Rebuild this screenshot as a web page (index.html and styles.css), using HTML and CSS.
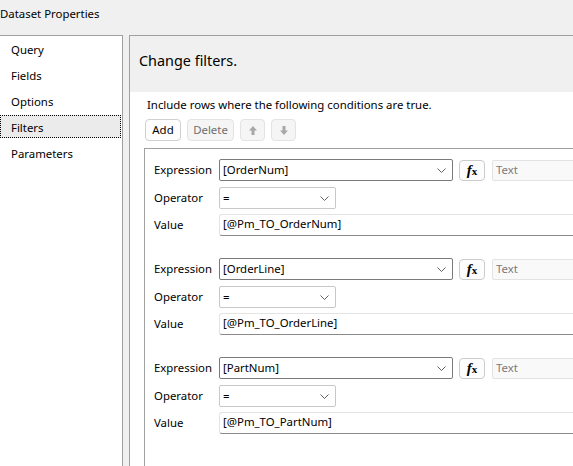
FILE: index.html
```html
<!DOCTYPE html>
<html>
<head>
    <title>Dataset Properties</title>
    <link rel="stylesheet" href="styles.css">
</head>
<body>
<div class="titlebar">Dataset Properties</div>
<div class="main">
    <div class="sidebar">
        <div class="nav-item">Query</div>
        <div class="nav-item">Fields</div>
        <div class="nav-item">Options</div>
        <div class="nav-item selected">Filters</div>
        <div class="nav-item">Parameters</div>
    </div>
    <div class="page">
        <div class="page-header">Change filters.</div>
        <div class="page-body">
            <div class="hint">Include rows where the following conditions are true.</div>
            <div class="toolbar">
                <div class="btn btn-add">Add</div>
                <div class="btn disabled btn-delete">Delete</div>
                <div class="btn disabled btn-icon">
                    <svg width="8" height="9" viewBox="0 0 8 9"><path d="M4 0 L8 4.5 L5.5 4.5 L5.5 9 L2.5 9 L2.5 4.5 L0 4.5 Z" fill="#a8a8a8"/></svg>
                </div>
                <div class="btn disabled btn-icon">
                    <svg width="8" height="9" viewBox="0 0 8 9"><path d="M4 9 L8 4.5 L5.5 4.5 L5.5 0 L2.5 0 L2.5 4.5 L0 4.5 Z" fill="#a8a8a8"/></svg>
                </div>
            </div>
            <div class="filter-list">
                <div class="filter">
                    <div class="filter-row">
                        <div class="label">Expression</div>
                        <div class="combo expr"><span>[OrderNum]</span><svg class="chev" width="9" height="5" viewBox="0 0 9 5"><path d="M0.5 0.5 L4.5 4.5 L8.5 0.5" fill="none" stroke="#606060"/></svg></div>
                        <div class="fx-btn"><i>f</i><b>x</b></div>
                        <div class="text-field">Text</div>
                    </div>
                    <div class="filter-row">
                        <div class="label">Operator</div>
                        <div class="combo oper"><span>=</span><svg class="chev" width="9" height="5" viewBox="0 0 9 5"><path d="M0.5 0.5 L4.5 4.5 L8.5 0.5" fill="none" stroke="#606060"/></svg></div>
                    </div>
                    <div class="filter-row">
                        <div class="label">Value</div>
                        <div class="value-box">[@Pm_TO_OrderNum]</div>
                    </div>
                </div>
                <div class="filter">
                    <div class="filter-row">
                        <div class="label">Expression</div>
                        <div class="combo expr"><span>[OrderLine]</span><svg class="chev" width="9" height="5" viewBox="0 0 9 5"><path d="M0.5 0.5 L4.5 4.5 L8.5 0.5" fill="none" stroke="#606060"/></svg></div>
                        <div class="fx-btn"><i>f</i><b>x</b></div>
                        <div class="text-field">Text</div>
                    </div>
                    <div class="filter-row">
                        <div class="label">Operator</div>
                        <div class="combo oper"><span>=</span><svg class="chev" width="9" height="5" viewBox="0 0 9 5"><path d="M0.5 0.5 L4.5 4.5 L8.5 0.5" fill="none" stroke="#606060"/></svg></div>
                    </div>
                    <div class="filter-row">
                        <div class="label">Value</div>
                        <div class="value-box">[@Pm_TO_OrderLine]</div>
                    </div>
                </div>
                <div class="filter">
                    <div class="filter-row">
                        <div class="label">Expression</div>
                        <div class="combo expr"><span>[PartNum]</span><svg class="chev" width="9" height="5" viewBox="0 0 9 5"><path d="M0.5 0.5 L4.5 4.5 L8.5 0.5" fill="none" stroke="#606060"/></svg></div>
                        <div class="fx-btn"><i>f</i><b>x</b></div>
                        <div class="text-field">Text</div>
                    </div>
                    <div class="filter-row">
                        <div class="label">Operator</div>
                        <div class="combo oper"><span>=</span><svg class="chev" width="9" height="5" viewBox="0 0 9 5"><path d="M0.5 0.5 L4.5 4.5 L8.5 0.5" fill="none" stroke="#606060"/></svg></div>
                    </div>
                    <div class="filter-row">
                        <div class="label">Value</div>
                        <div class="value-box">[@Pm_TO_PartNum]</div>
                    </div>
                </div>
            </div>
        </div>
    </div>
</div>
</body>
</html>
```

FILE: styles.css
```css
* {
    box-sizing: border-box;
}
html, body {
    margin: 0;
    height: 100%;
    overflow: hidden;
}
body {
    background-color: #f0f0f0;
    font-family: "Noto Sans", sans-serif;
    font-size: 11.4px;
    color: #000;
}
.titlebar {
    height: 35px;
    padding-top: 6px;
    line-height: 16px;
    font-size: 11.4px;
}
.main {
    display: flex;
    height: 431px;
}
.sidebar {
    width: 123px;
    flex-shrink: 0;
    background-color: #fff;
    border-top: 1px solid #a0a0a0;
    border-right: 1px solid #a0a0a0;
    padding-top: 1px;
}
.nav-item {
    height: 23px;
    padding-top: 3px;
    padding-left: 10px;
    margin-right: 1px;
    margin-bottom: 3px;
    border: 1px solid transparent;
    line-height: 17px;
}
.nav-item.selected {
    background-color: #ebebeb;
    border: 1px dotted #000;
}
.page {
    flex: 1;
    margin-left: 6px;
    background-color: #fff;
    border-top: 1px solid #a0a0a0;
    border-left: 1px solid #a0a0a0;
    min-width: 0;
}
.page-header {
    height: 56px;
    background-color: #f0f0f0;
    padding-top: 14px;
    padding-left: 9px;
    font-size: 14.4px;
    line-height: 22px;
}
.page-body {
    padding-left: 14px;
    padding-top: 5px;
}
.hint {
    line-height: 16px;
    padding-left: 3px;
}
.toolbar {
    display: flex;
    gap: 6px;
    margin-top: 6px;
    margin-left: 1px;
}
.btn {
    height: 22px;
    line-height: 20px;
    border: 1px solid #d0d0d0;
    border-radius: 4px;
    background-color: #fdfdfd;
    text-align: center;
}
.btn-add {
    width: 36px;
}
.btn-delete {
    width: 47px;
}
.btn-icon {
    width: 25px;
    display: flex;
    align-items: center;
    justify-content: center;
}
.btn.disabled {
    background-color: #f5f5f5;
    border-color: #e3e3e3;
    color: #6e6e6e;
}
.filter-list {
    margin-top: 7px;
    border-top: 1px solid #a0a0a0;
    border-left: 1px solid #a0a0a0;
    height: 400px;
    padding-top: 10px;
    padding-left: 9px;
}
.filter {
    margin-bottom: 22px;
}
.filter-row {
    display: flex;
    align-items: center;
    height: 22px;
    margin-bottom: 6px;
}
.filter-row:last-child {
    margin-bottom: 0;
}
.filter-row:nth-child(2) {
    margin-bottom: 5px;
}
.label {
    width: 65px;
    flex-shrink: 0;
    padding-bottom: 2px;
}
.combo {
    height: 22px;
    border: 1px solid #c8c8c8;
    border-radius: 2px;
    display: flex;
    align-items: center;
    justify-content: space-between;
    padding-left: 3px;
    padding-right: 6px;
    flex-shrink: 0;
}
.combo span {
    padding-bottom: 2px;
}
.combo.expr {
    width: 234px;
    border-color: #7a7a7a;
}
.combo.oper {
    width: 117px;
}
.fx-btn {
    width: 26px;
    height: 21px;
    margin-left: 6px;
    border: 1px solid #cccccc;
    border-radius: 4px;
    background-color: #fdfdfd;
    text-align: center;
    font-family: "Liberation Serif", serif;
    font-size: 15px;
    line-height: 18px;
    flex-shrink: 0;
}
.fx-btn i {
    font-weight: bold;
}
.fx-btn b {
    font-size: 11px;
}
.text-field {
    width: 120px;
    height: 21px;
    margin-left: 7px;
    border: 1px solid #e3e3e3;
    border-radius: 2px;
    background-color: #f9f9f9;
    color: #7a7a7a;
    padding-left: 3px;
    line-height: 18px;
    flex-shrink: 0;
}
.value-box {
    width: 420px;
    height: 22px;
    border: 1px solid #e3e3e3;
    border-bottom: 1px solid #8a8a8a;
    border-radius: 3px 0 0 3px;
    padding-left: 3px;
    line-height: 18px;
    flex-shrink: 0;
}
```
